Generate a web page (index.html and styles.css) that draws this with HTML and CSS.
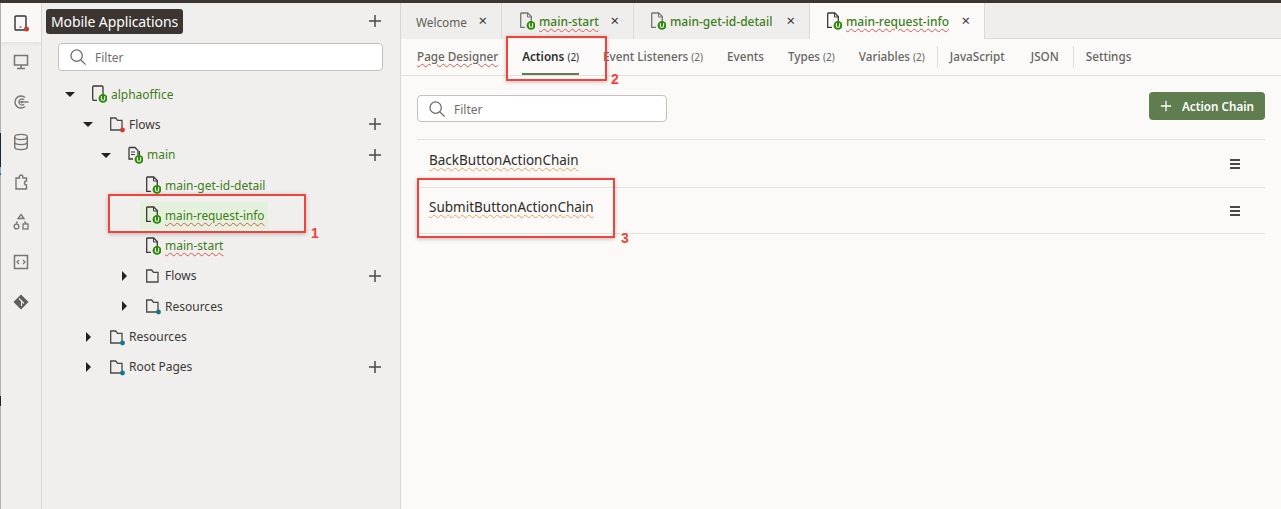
FILE: index.html
```html
<!DOCTYPE html>
<html lang="en">
<head>
<meta charset="utf-8">
<title>Mobile Applications</title>
<link rel="stylesheet" href="styles.css">
</head>
<body>
<svg class="defs" width="0" height="0" aria-hidden="true">
  <symbol id="plus" viewBox="0 0 14 14"><path d="M7 1v12M1 7h12" fill="none" stroke="currentColor" stroke-width="1.5"/></symbol>
  <symbol id="search" viewBox="0 0 20 20"><circle cx="8.5" cy="8.5" r="6.3" fill="none" stroke="#6b6865" stroke-width="1.4"/><path d="M13 13l5.5 5.5" stroke="#6b6865" stroke-width="1.4"/></symbol>
  <symbol id="page" viewBox="0 0 16 18"><path d="M1.700 1h7l3.600 3.600V10M6 15.300H1.700V1" fill="none" stroke="currentColor" stroke-width="1.300"/><path d="M8.500 1v4h3.800" fill="none" stroke="currentColor" stroke-width="1"/><circle cx="12" cy="13.400" r="4.400" fill="#2c8a08"/><path d="M10.400 11.200v2.700q0 1.400 1.600 1.400t1.600-1.400v-2.700" fill="none" stroke="#fff" stroke-width="1.100"/></symbol>
  <symbol id="device" viewBox="0 0 16 18"><path d="M6 15.300H2.700a1 1 0 0 1-1-1V2a1 1 0 0 1 1-1h8.300a1 1 0 0 1 1 1v8" fill="none" stroke="#3b3937" stroke-width="1.300"/><circle cx="12" cy="13.400" r="4.400" fill="#2c8a08"/><path d="M10.400 11.200v2.700q0 1.400 1.600 1.400t1.600-1.400v-2.700" fill="none" stroke="#fff" stroke-width="1.100"/></symbol>
  <symbol id="flow" viewBox="0 0 16 18"><path d="M2 1.500h6l3 3v5M6 13H2V1.500" fill="none" stroke="#3b3937" stroke-width="1.300"/><path d="M4 6h4M4 8.500h4" stroke="#3b3937" stroke-width="1"/><path d="M12.500 5v4" stroke="#3b3937" stroke-width="1"/><circle cx="12" cy="13.400" r="4.400" fill="#2c8a08"/><path d="M10.400 11.200v2.700q0 1.400 1.600 1.400t1.600-1.400v-2.700" fill="none" stroke="#fff" stroke-width="1.100"/></symbol>
  <symbol id="folder" viewBox="0 0 16 18"><path d="M1.700 15V3h5l1.800 2.400h4.500V15z" fill="none" stroke="#4a4846" stroke-width="1.300"/></symbol>
  <symbol id="folder-red" viewBox="0 0 16 18"><path d="M1.700 15V3h5l1.800 2.400h4.500V15z" fill="none" stroke="#4a4846" stroke-width="1.300"/><circle cx="13.500" cy="15" r="2.400" fill="#d5372f"/></symbol>
  <symbol id="folder-blue" viewBox="0 0 16 18"><path d="M1.700 15V3h5l1.800 2.400h4.500V15z" fill="none" stroke="#4a4846" stroke-width="1.300"/><circle cx="13.500" cy="15" r="2.400" fill="#14758f"/></symbol>
</svg>

<div class="topbar"></div>
<div class="app">
  <div class="edge"></div>
  <nav class="rail">
    <div class="rail-item rail-active">
      <svg class="rail-icon" viewBox="0 0 20 20"><rect x="4" y="3" width="11" height="14" rx="1" fill="none" stroke="#33312f" stroke-width="1.400"/><path d="M8.500 14h2" stroke="#33312f"/><circle cx="15.500" cy="16" r="2.500" fill="#d5372f"/></svg>
    </div>
    <div class="rail-item">
      <svg class="rail-icon" viewBox="0 0 20 20"><rect x="3.500" y="3.500" width="13" height="9.500" fill="none" stroke="#777472" stroke-width="1.500"/><path d="M10 13v3M6 16.500h8" stroke="#777472" stroke-width="1.500"/></svg>
    </div>
    <div class="rail-item">
      <svg class="rail-icon" viewBox="0 0 20 20"><path d="M14 5.500a6 6 0 1 0 0 9" fill="none" stroke="#777472" stroke-width="1.400"/><path d="M13 7.800a3 3 0 1 0 0 4.400" fill="none" stroke="#777472" stroke-width="1.200"/><circle cx="10.500" cy="10" r="1.300" fill="#777472"/><path d="M11 10h6.500" stroke="#777472" stroke-width="1.400"/></svg>
    </div>
    <div class="rail-item">
      <svg class="rail-icon" viewBox="0 0 20 20"><ellipse cx="10" cy="5" rx="6.300" ry="2.600" fill="none" stroke="#777472" stroke-width="1.400"/><path d="M3.700 5v10c0 1.500 2.800 2.600 6.300 2.600s6.300-1.100 6.300-2.600V5M3.700 10c0 1.500 2.800 2.600 6.300 2.600s6.300-1.100 6.300-2.600" fill="none" stroke="#777472" stroke-width="1.400"/></svg>
    </div>
    <div class="rail-item">
      <svg class="rail-icon" viewBox="0 0 20 20"><path d="M5 17V6h3.500a2 2 0 0 1 3-2.500L12 6h3.500v3a2 2 0 0 0 0 4v4z" fill="none" stroke="#777472" stroke-width="1.400"/></svg>
    </div>
    <div class="rail-item">
      <svg class="rail-icon" viewBox="0 0 20 20"><path d="M10 2.500l3 4h-6zM6.500 9.500L5 11.500M13.500 9.500L15 11.500" fill="none" stroke="#777472" stroke-width="1.300"/><circle cx="5.500" cy="14.500" r="2.400" fill="none" stroke="#777472" stroke-width="1.300"/><rect x="12" y="12" width="5" height="5" fill="none" stroke="#777472" stroke-width="1.300"/></svg>
    </div>
    <div class="rail-item">
      <svg class="rail-icon" viewBox="0 0 20 20"><rect x="3.500" y="3.500" width="13" height="13" fill="none" stroke="#777472" stroke-width="1.500"/><path d="M8 8l-2 2 2 2M12 8l2 2-2 2" fill="none" stroke="#777472" stroke-width="1.200"/></svg>
    </div>
    <div class="rail-item">
      <svg class="rail-icon" viewBox="0 0 20 20"><path d="M10 2.500l7.500 7.500-7.500 7.500L2.500 10z" fill="#5f5c5a"/><path d="M8 6.500l2.500 2.500v5M10.500 9l2.500 2.500" fill="none" stroke="#f0efed" stroke-width="1.100"/></svg>
    </div>
  </nav>

  <aside class="tree-panel">
    <header class="panel-head">
      <span class="tooltip">Mobile Applications</span>
      <svg class="plus"><use href="#plus"/></svg>
    </header>
    <div class="filter filter-tree">
      <svg class="search-icon"><use href="#search"/></svg>
      <span class="filter-text">Filter</span>
    </div>
    <ul class="tree">
      <li class="row l0"><i class="caret down"></i><svg class="node"><use href="#device"/></svg><span class="green">alphaoffice</span></li>
      <li class="row l1"><i class="caret down"></i><svg class="node"><use href="#folder-red"/></svg><span>Flows</span><svg class="plus"><use href="#plus"/></svg></li>
      <li class="row l2"><i class="caret down"></i><svg class="node"><use href="#flow"/></svg><span class="green">main</span><svg class="plus"><use href="#plus"/></svg></li>
      <li class="row l3"><i class="caret none"></i><svg class="node dark"><use href="#page"/></svg><span class="green">main-get-id-detail</span></li>
      <li class="row l3"><i class="caret none"></i><span class="selected"><svg class="node dark"><use href="#page"/></svg><span class="green wavy">main-request-info</span></span></li>
      <li class="row l3"><i class="caret none"></i><svg class="node dark"><use href="#page"/></svg><span class="green wavy">main-start</span></li>
      <li class="row l3"><i class="caret right"></i><svg class="node"><use href="#folder"/></svg><span>Flows</span><svg class="plus"><use href="#plus"/></svg></li>
      <li class="row l3"><i class="caret right"></i><svg class="node"><use href="#folder-blue"/></svg><span>Resources</span></li>
      <li class="row l1"><i class="caret right"></i><svg class="node"><use href="#folder-blue"/></svg><span>Resources</span></li>
      <li class="row l1"><i class="caret right"></i><svg class="node"><use href="#folder-blue"/></svg><span>Root Pages</span><svg class="plus"><use href="#plus"/></svg></li>
    </ul>
  </aside>

  <main class="main">
    <div class="tabs">
      <div class="tab tab-welcome"><span class="tab-plain">Welcome</span><span class="close">×</span></div>
      <div class="tab tab-start"><svg class="node grey"><use href="#page"/></svg><span class="green-b wavy">main-start</span><span class="close">×</span></div>
      <div class="tab tab-detail"><svg class="node grey"><use href="#page"/></svg><span class="green-b">main-get-id-detail</span><span class="close">×</span></div>
      <div class="tab tab-info tab-active"><svg class="node dark"><use href="#page"/></svg><span class="green-b wavy">main-request-info</span><span class="close">×</span></div>
    </div>
    <div class="subnav">
      <span class="sub wavy">Page Designer</span>
      <span class="sub sub-active">Actions <small>(2)</small></span>
      <span class="sub">Event Listeners <small>(2)</small></span>
      <span class="sub">Events</span>
      <span class="sub">Types <small>(2)</small></span>
      <span class="sub">Variables <small>(2)</small></span>
      <span class="divider"></span>
      <span class="sub sub-wide">JavaScript</span>
      <span class="sub sub-wide">JSON</span>
      <span class="divider"></span>
      <span class="sub">Settings</span>
    </div>
    <div class="content">
      <div class="toolbar">
        <div class="filter filter-main">
          <svg class="search-icon"><use href="#search"/></svg>
          <span class="filter-text">Filter</span>
        </div>
        <button class="add-btn"><svg class="btn-plus"><use href="#plus"/></svg>Action Chain</button>
      </div>
      <div class="chain chain-first"><span class="chain-name">BackButtonActionChain</span><span class="menu"><i></i><i></i><i></i></span></div>
      <div class="chain"><span class="chain-name">SubmitButtonActionChain</span><span class="menu"><i></i><i></i><i></i></span></div>
    </div>
  </main>
</div>

<div class="mark mark-1"></div><span class="mark-num num-1">1</span>
<div class="mark mark-2"></div><span class="mark-num num-2">2</span>
<div class="mark mark-3"></div><span class="mark-num num-3">3</span>
</body>
</html>
```

FILE: styles.css
```css
* { box-sizing: border-box; }
html, body { margin: 0; height: 100%; overflow: hidden; }
body { font-family: "Noto Sans", "Open Sans", sans-serif; color: #33312f; background: #f0efed; position: relative; }
.defs { position: absolute; }
.topbar { height: 3px; background: #3b3632; }
.app { display: flex; height: 506px; }
.edge { width: 1px; background: linear-gradient(#b4b2b0 0 130px, #1d2733 130px 164px, #8fa3b5 164px 170px, #0b6fb8 170px 172px, #b4b2b0 172px 393px, #1d2733 393px 403px, #b4b2b0 403px 506px); }
.rail { width: 41px; border-right: 1px solid #dddbd9; background: #f0efed; display: flex; flex-direction: column; }
.rail-item { height: 40px; display: flex; align-items: center; justify-content: center; }
.rail-active { height: 39px; background: #f9f8f6; box-shadow: 0 2px 4px rgba(0,0,0,.06); }
.rail-icon { width: 20px; height: 20px; }

.tree-panel { width: 359px; border-right: 1px solid #d9d7d5; background: #f0efed; display: flex; flex-direction: column; }
.panel-head { height: 40px; display: flex; align-items: center; padding: 0 18px 4px 4px; }
.tooltip { background: #3b3632; color: #fff; font-size: 14px; line-height: 25px; height: 25px; padding: 0 5px; border-radius: 3px; letter-spacing: -.1px; }
.plus { width: 14px; height: 14px; margin-left: auto; color: #4a4846; flex: none; }
.filter { display: flex; align-items: center; background: #fff; border: 1px solid #c4c2c0; border-radius: 4px; height: 28px; }
.filter-tree { margin: 0 17px 0 16px; }
.search-icon { width: 18px; height: 18px; margin-left: 10px; flex: none; }
.filter-text { font-size: 12px; color: #716e6b; margin-left: 8px; }

.tree { list-style: none; margin: 8px 0 0; padding: 0; }
.row { height: 30.300px; display: flex; align-items: center; font-size: 12px; padding-right: 18px; color: #3b3937; }
.l0 { padding-left: 23px; }
.l1 { padding-left: 41px; }
.l2 { padding-left: 59px; }
.l3 { padding-left: 77px; }
.caret { width: 10px; height: 10px; margin-right: 16px; flex: none; display: block; position: relative; }
.caret.down::before { content: ""; position: absolute; left: 0; top: 3px; border: solid transparent; border-width: 5px 5px 0; border-top-color: #222; }
.caret.right::before { content: ""; position: absolute; left: 3px; top: 0; border: solid transparent; border-width: 5px 0 5px 5px; border-left-color: #222; }
.node { width: 16px; height: 18px; margin-right: 4px; flex: none; color: #3b3937; }
.node.grey { color: #77746f; }
.green { color: #3f7d1b; }
.green-b { color: #3f7d1b; font-weight: 500; }
.wavy { text-decoration: underline wavy #d9574d 1px; text-underline-offset: 2px; }
.selected { display: flex; align-items: center; height: 27px; background: #e4f1dc; margin-left: -5px; padding: 0 3px 0 5px; font-size: 11.800px; }

.main { flex: 1; min-width: 0; display: flex; flex-direction: column; background: #fbfaf8; }
.tabs { height: 36px; display: flex; background: #efeeec; border-bottom: 1px solid #dcdad8; }
.tab { display: flex; align-items: center; height: 36px; font-size: 12px; padding-left: 15px; border-right: 1px solid #dcdad8; position: relative; background: #efeeec; flex: none; }
.tab-welcome { width: 101px; }
.tab-start { width: 132px; padding-left: 17px; }
.tab-detail { width: 176px; padding-left: 16px; }
.tab-info { width: 175px; padding-left: 16px; }
.tab-active { background: #fbfaf8; }
.tab-plain { color: #5f5c5a; font-size: 11.800px; padding-top: 2px; }
.close { position: absolute; right: 14px; top: 9px; font-size: 15px; line-height: 16px; color: #3b3937; }
.subnav { height: 37px; display: flex; align-items: center; padding-left: 16px; border-bottom: 1px solid #e2e0de; font-size: 11.700px; color: #676461; }
.sub { margin-right: 24px; white-space: nowrap; height: 36px; line-height: 34px; position: relative; font-weight: 500; }
.sub-wide { margin-right: 26px; }
.sub small { font-size: 10px; font-weight: 400; }
.sub-active { color: #2e2c2a; font-weight: 600; }
.sub-active::after { content: ""; position: absolute; left: 0; right: 0; bottom: 0; height: 2px; background: #5f7d4f; }
.divider { width: 1px; height: 22px; background: #e0dedc; margin-right: 12px; margin-left: -12px; }
.content { padding: 16px 16px 0; }
.toolbar { display: flex; justify-content: space-between; align-items: flex-start; height: 48px; border-bottom: 1px solid #e4e2e0; }
.filter-main { width: 250px; height: 27px; margin-top: 3px; }
.filter-main .filter-text { padding-top: 1px; }
.add-btn { width: 116px; height: 28px; border: 0; border-radius: 4px; background: #5f7d4f; color: #fff; font: 600 11.700px "Noto Sans", sans-serif; display: flex; align-items: center; justify-content: center; padding: 0; }
.btn-plus { width: 12px; height: 12px; margin-right: 10px; color: #fff; }
.chain { height: 46px; display: flex; align-items: center; justify-content: space-between; border-bottom: 1px solid #e4e2e0; padding: 0 25px 0 12px; }
.chain-first { height: 48px; }
.chain-name { font-size: 13.500px; color: #2e2c2a; margin-bottom: 8px; text-decoration: underline wavy #eea25a 1px; text-underline-offset: 2px; }
.menu { display: flex; flex-direction: column; gap: 2px; width: 10px; }
.menu i { display: block; height: 2px; background: #4a4846; }

.mark { position: absolute; border: 2px solid #f0443a; box-shadow: 0 1px 4px rgba(0,0,0,.25); }
.mark-1 { left: 108px; top: 194px; width: 198px; height: 39px; }
.mark-2 { left: 506px; top: 36px; width: 101px; height: 45px; }
.mark-3 { left: 417px; top: 178px; width: 198px; height: 60px; }
.mark-num { position: absolute; color: #f0443a; font: 700 14px "Liberation Sans", sans-serif; }
.num-1 { left: 311px; top: 225px; }
.num-2 { left: 611px; top: 71px; }
.num-3 { left: 621px; top: 230px; }
```
